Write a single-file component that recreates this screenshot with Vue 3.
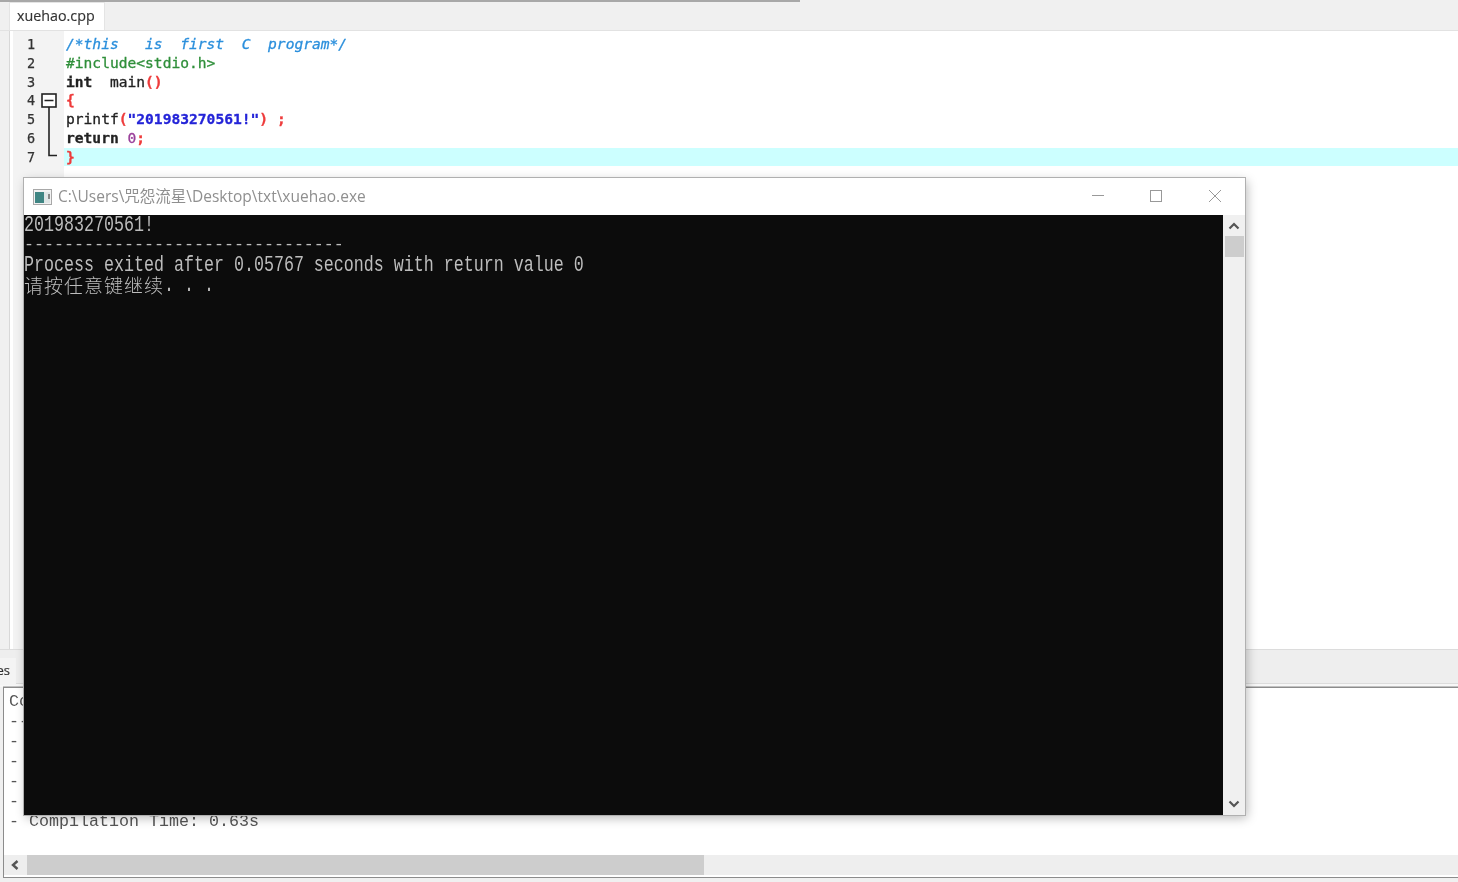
<script setup>
const gutterLines = [1, 2, 3, 4, 5, 6, 7]
const comment = '/*this   is  first  C  program*/'
const intMain = '  main'
const compileTime = '- Compilation Time: 0.63s'
const dashes = '-'.repeat(32)
</script>

<template>
  <div class="app">
    <div class="topline"></div>
    <div class="tabbar"><div class="tab">xuehao.cpp</div></div>

    <div class="editor">
      <div class="gutter">
        <div v-for="n in gutterLines" :key="n" class="num">{{ n }}</div>
        <svg class="fold" width="18" height="66" viewBox="0 0 18 66">
          <rect x="1" y="1" width="14" height="13" fill="#fff" stroke="#222" stroke-width="1.6" />
          <path d="M3.5 7.5H12.5M8 14V62.5H16" fill="none" stroke="#222" stroke-width="1.6" />
        </svg>
      </div>
      <div class="code">
        <div class="line cmt">{{ comment }}</div>
        <div class="line pre">#include&lt;stdio.h&gt;</div>
        <div class="line"><b>int</b>{{ intMain }}<b class="red">()</b></div>
        <div class="line"><b class="red">{</b></div>
        <div class="line">printf<b class="red">(</b><b class="str">"201983270561!"</b><b class="red">) ;</b></div>
        <div class="line"><b>return</b> <span class="zero">0</span><b class="red">;</b></div>
        <div class="line active"><b class="red">}</b></div>
      </div>
    </div>

    <div class="lowertabs"><div class="ltab">es</div></div>

    <div class="output">
      <div class="outtext">
        <div>Co</div>
        <div>--</div>
        <div>-</div>
        <div>-</div>
        <div>-</div>
        <div>-</div>
        <div>{{ compileTime }}</div>
      </div>
      <div class="hscroll">
        <svg class="harrow" width="10" height="12" viewBox="0 0 10 12">
          <path d="M7.5 2L3 6L7.5 10" fill="none" stroke="#555" stroke-width="2.4" />
        </svg>
        <div class="hthumb"></div>
      </div>
    </div>
    <div class="footer"></div>

    <section class="console">
      <header class="titlebar">
        <svg class="winicon" width="20" height="16" viewBox="0 0 20 16">
          <rect x="0.5" y="0.5" width="18" height="15" fill="#f2f2f2" stroke="#a8a8a8" />
          <rect x="2" y="3" width="9" height="11" fill="#3f8583" />
          <rect x="11" y="3" width="6" height="11" fill="#dfe6e6" />
          <rect x="15" y="5" width="2" height="5" fill="#888" />
        </svg>
        <span class="title">C:\Users\咒怨流星\Desktop\txt\xuehao.exe</span>
        <div class="controls">
          <svg width="14" height="14" viewBox="0 0 14 14"><path d="M1 6.5H13" stroke="#999" stroke-width="1" /></svg>
          <svg class="maxbtn" width="14" height="14" viewBox="0 0 14 14"><rect x="1.5" y="1.5" width="11" height="11" fill="none" stroke="#999" /></svg>
          <svg width="14" height="14" viewBox="0 0 14 14"><path d="M1 1L13 13M13 1L1 13" stroke="#999" stroke-width="1" /></svg>
        </div>
      </header>
      <div class="body">
        <div class="terminal">
          <div class="tall">201983270561!</div>
          <div class="dash">{{ dashes }}</div>
          <div class="tall">Process exited after 0.05767 seconds with return value 0</div>
          <div class="tall"><span class="cjk">请按任意键继续</span>. . .</div>
        </div>
        <div class="vscroll">
          <svg class="varrow" width="12" height="8" viewBox="0 0 12 8"><path d="M1.5 6.5L6 2L10.5 6.5" fill="none" stroke="#555" stroke-width="2.2" /></svg>
          <div class="vthumb"></div>
          <svg class="varrow down" width="12" height="8" viewBox="0 0 12 8"><path d="M1.5 1.5L6 6L10.5 1.5" fill="none" stroke="#555" stroke-width="2.2" /></svg>
        </div>
      </div>
    </section>
  </div>
</template>

<style>
html, body { margin: 0; background: #f0f0f0; }
</style>

<style scoped>
.app {
  position: relative;
  width: 1458px;
  height: 882px;
  overflow: hidden;
  display: flex;
  flex-direction: column;
  background: #f0f0f0;
  filter: blur(0.35px);
}
.topline { width: 800px; height: 2px; background: #a8a8a8; }
.tabbar {
  height: 28px;
  padding-left: 9px;
  display: flex;
  align-items: flex-end;
  border-bottom: 1px solid #e2e2e2;
}
.tab {
  width: 96px;
  height: 28px;
  background: #fff;
  box-sizing: border-box;
  padding-left: 7px;
  font: 14.3px/26px "Open Sans", sans-serif;
  color: #333;
  border: 1px solid #e4e4e4;
  border-bottom: 0;
  -webkit-text-stroke: 0.15px #333;
}
.editor {
  flex: 1;
  margin-left: 9px;
  padding-left: 3px;
  display: flex;
  background: #fff;
  border-left: 1px solid #d8d8d8;
}
.gutter {
  position: relative;
  width: 51px;
  padding-top: 4px;
  background: #f3f3f3;
  box-sizing: border-box;
}
.num {
  height: 18.75px;
  padding-left: 14px;
  font: 13.5px/18.75px "DejaVu Sans Mono", monospace;
  color: #333;
  -webkit-text-stroke: 0.25px #333;
}
.fold { position: absolute; left: 28px; top: 62px; }
.code { flex: 1; padding-top: 4px; }
.line {
  height: 18.75px;
  padding-left: 2px;
  white-space: pre;
  font: 14.6px/18.75px "DejaVu Sans Mono", monospace;
  color: #222;
  -webkit-text-stroke: 0.3px currentColor;
}
.line b { font-weight: 700; }
.cmt { color: #2b8fdc; font-style: italic; }
.pre { color: #2f8f3a; }
.red { color: #ee3b3b; }
.str { color: #2424d8; }
.zero { color: #9a3f9a; }
.active { background: #ccffff; }

.lowertabs {
  height: 37px;
  background: linear-gradient(#eee 0 33px, #dcdcdc 33px 34px, #f7f7f7 34px);
  border-top: 1px solid #dcdcdc;
  display: flex;
  align-items: flex-end;
}
.ltab {
  width: 20px;
  margin-left: -4px;
  height: 27px;
  box-sizing: border-box;
  background: #f4f4f4;
  text-align: right;
  padding-right: 6px;
  font: 13px/25px "Open Sans", sans-serif;
  color: #333;
  overflow: hidden;
  margin-bottom: 2px;
  -webkit-text-stroke: 0.2px #333;
}
.output {
  height: 189px;
  margin-left: 3px;
  border: 1px solid #8c8c8c;
  border-right: 0;
  box-shadow: 0 -0.5px 0 #8c8c8c;
  background: #fff;
  display: flex;
  flex-direction: column;
}
.outtext {
  flex: 1;
  padding: 4px 0 0 5px;
  font: 16.67px/20px "Liberation Mono", monospace;
  color: #555;
  white-space: pre;
}
.hscroll {
  height: 20px;
  margin-bottom: 2px;
  background: #eee;
  display: flex;
  align-items: center;
}
.harrow { margin-left: 6px; }
.hthumb { width: 677px; height: 20px; margin-left: 7px; background: #cdcdcd; }
.footer { height: 4px; }

.console {
  position: absolute;
  left: 24px;
  top: 178px;
  width: 1221px;
  height: 637px;
  display: flex;
  flex-direction: column;
  background: #fff;
  box-shadow: 0 0 0 1px #b0b0b0, 2px 3px 10px rgba(0, 0, 0, 0.28);
}
.titlebar {
  height: 37px;
  flex: none;
  display: flex;
  align-items: center;
  padding-left: 9px;
}
.winicon { flex: none; }
.title {
  margin-left: 5px;
  margin-bottom: 2px;
  font: 15.5px "Open Sans", "Noto Sans CJK SC", sans-serif;
  color: #8f8f8f;
  white-space: nowrap;
}
.controls {
  margin-left: auto;
  margin-bottom: 2px;
  width: 131px;
  padding-right: 23px;
  display: flex;
  justify-content: space-between;
  flex: none;
}
.maxbtn { margin-right: 2px; }
.body { flex: 1; display: flex; min-height: 0; }
.terminal {
  flex: 1;
  background: #0c0c0c;
  color: #bdbdbd;
  font: 16.67px/20px "Liberation Mono", monospace;
  white-space: pre;
}
.tall {
  height: 15.4px;
  line-height: 15.4px;
  margin-bottom: 4.6px;
  transform: scaleY(1.3);
  transform-origin: 0 0;
}
.dash { height: 20px; }
.cjk {
  font-family: "Noto Sans CJK SC", sans-serif;
  font-size: 19px;
  letter-spacing: 1px;
  font-weight: 300;
  display: inline-block;
  transform: scaleY(0.77);
  line-height: 15.4px;
  vertical-align: top;
}
.vscroll {
  width: 22px;
  background: #f0f0f0;
  flex: none;
  display: flex;
  flex-direction: column;
  align-items: center;
}
.varrow { margin-top: 7px; flex: none; }
.varrow.down { margin-top: auto; margin-bottom: 7px; }
.vthumb { width: 19px; height: 21px; margin-top: 6px; background: #cdcdcd; }
</style>
